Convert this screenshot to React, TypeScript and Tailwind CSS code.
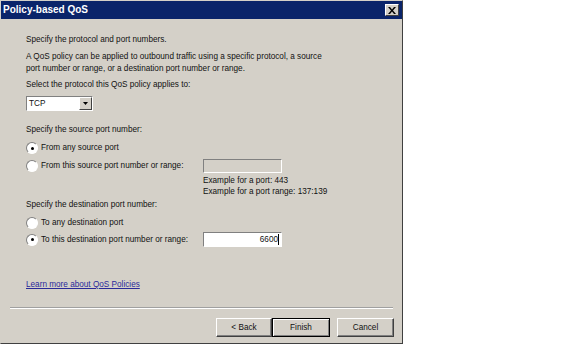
const Radio = ({ checked }: { checked?: boolean }) => (
  <span className="relative inline-block h-[12px] w-[12px] shrink-0 rounded-full border border-t-[#808080] border-l-[#808080] border-b-white border-r-white bg-white">
    {checked && <span className="absolute left-[3.5px] top-[3.5px] h-[3px] w-[3px] rounded-full bg-black" />}
  </span>
);

const Button = ({ label, width, focused }: { label: string; width: string; focused?: boolean }) => (
  <div
    className={`flex h-[19px] items-center justify-center border bg-[#d4d0c8] ${width} ${
      focused
        ? "border-black shadow-[inset_1px_1px_0_#fff,inset_-1px_-1px_0_#808080]"
        : "border-t-white border-l-white border-b-[#404040] border-r-[#404040] shadow-[inset_-1px_-1px_0_#808080]"
    }`}
  >
    {label}
  </div>
);

export default function App() {
  return (
    <div className="h-[360px] w-[576px] bg-white font-['Liberation_Sans',Arial,sans-serif] text-[8.2px] leading-[12px] text-[#111]">
      <div className="flex h-[344px] w-[403px] flex-col border border-t-[#d4d0c8] border-l-[#d4d0c8] border-b-[#404040] border-r-[#404040] bg-[#d4d0c8]">
        <div className="flex h-[18px] shrink-0 items-center justify-between bg-[#0a246a] pl-[2px] pr-[3px]">
          <span className="text-[10px] font-bold text-white">Policy-based QoS</span>
          <div className="flex h-[12px] w-[14px] items-center justify-center border border-t-white border-l-white border-b-[#404040] border-r-[#404040] bg-[#d4d0c8]">
            <svg width="8" height="7" viewBox="0 0 8 7">
              <path d="M0 0h2l2 2.5L6 0h2L5 3.5 8 7H6L4 4.5 2 7H0l3-3.5z" fill="#000" />
            </svg>
          </div>
        </div>

        <div className="flex flex-1 flex-col pl-[25px] pr-[10px] pt-[15px]">
          <p>Specify the protocol and port numbers.</p>
          <p className="mt-[5px]">
            A QoS policy can be applied to outbound traffic using a specific protocol, a source
            <br />
            port number or range, or a destination port number or range.
          </p>
          <p className="mt-[4px]">Select the protocol this QoS policy applies to:</p>
          <div className="mt-[5px] flex h-[15px] w-[67px] border border-t-[#808080] border-l-[#808080] border-b-white border-r-white bg-white">
            <span className="flex-1 pl-[2px] leading-[13px]">TCP</span>
            <div className="flex w-[13px] items-center justify-center border border-t-white border-l-white border-b-[#404040] border-r-[#404040] bg-[#d4d0c8]">
              <svg width="5" height="3" viewBox="0 0 5 3">
                <path d="M0 0h5L2.5 3z" fill="#000" />
              </svg>
            </div>
          </div>

          <p className="mt-[13px]">Specify the source port number:</p>
          <div className="mt-[6px] flex h-[12px] items-center gap-[3px]">
            <Radio checked />
            <span>From any source port</span>
          </div>
          <div className="mt-[5px] flex items-center">
            <div className="flex w-[177px] items-center gap-[3px]">
              <Radio />
              <span>From this source port number or range:</span>
            </div>
            <div className="h-[14px] w-[79px] border border-t-[#808080] border-l-[#808080] border-b-white border-r-white" />
          </div>
          <div className="ml-[177px] mt-[2px] leading-[11px]">
            <p>Example for a port: 443</p>
            <p>Example for a port range: 137:139</p>
          </div>

          <p className="mt-[2px]">Specify the destination port number:</p>
          <div className="mt-[6px] flex h-[12px] items-center gap-[3px]">
            <Radio />
            <span>To any destination port</span>
          </div>
          <div className="mt-[3px] flex items-center">
            <div className="flex w-[177px] items-center gap-[3px]">
              <Radio checked />
              <span>To this destination port number or range:</span>
            </div>
            <div className="flex h-[15px] w-[79px] items-center justify-end border border-t-[#808080] border-l-[#808080] border-b-white border-r-white bg-white pr-[2px]">
              6600<span className="h-[11px] w-px bg-black" />
            </div>
          </div>

          <a className="mt-[32px] w-fit text-[#2a2a9a] underline">Learn more about QoS Policies</a>
        </div>

        <div className="mx-[9px] h-[2px] shrink-0 border-t border-b border-t-[#a0a0a0] border-b-white" />
        <div className="flex shrink-0 items-center justify-end gap-[7px] pb-[6px] pr-[8px] pt-[9px]">
          <div className="flex">
            <Button label="< Back" width="w-[56px]" />
            <Button label="Finish" width="w-[58px]" focused />
          </div>
          <Button label="Cancel" width="w-[57px]" />
        </div>
      </div>
    </div>
  );
}
